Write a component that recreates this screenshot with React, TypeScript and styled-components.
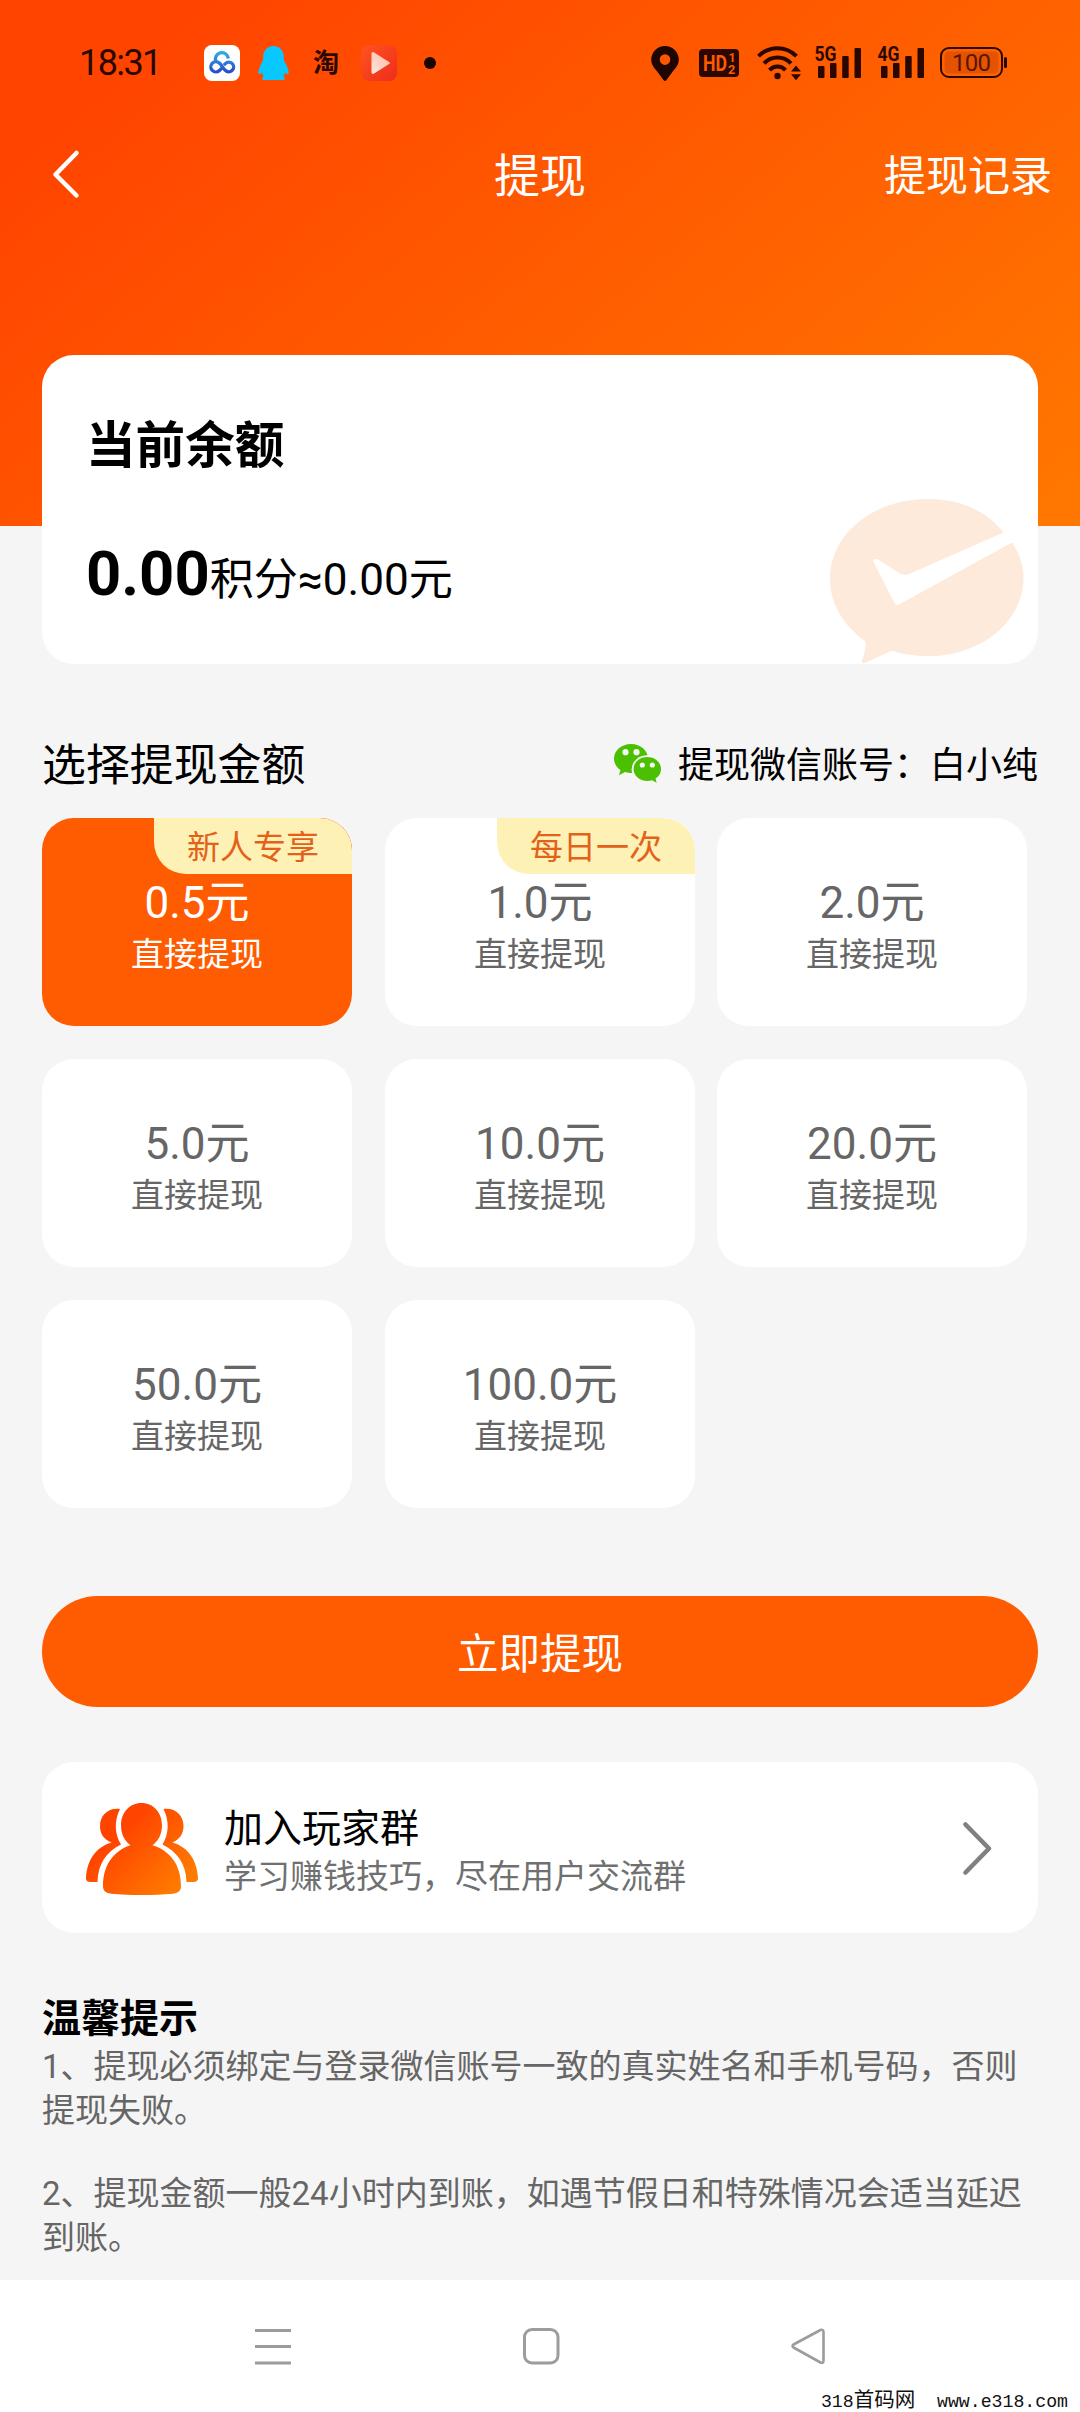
import React from "react";
import styled, { createGlobalStyle } from "styled-components";

const INK = "#2a0800";
const FONT = `Roboto, "Noto Sans CJK SC", sans-serif`;

const GlobalStyle = createGlobalStyle`
  body { margin: 0; background: #f5f5f5; font-family: ${FONT}; }
  * { box-sizing: border-box; }
  p, h1, h2, h3 { margin: 0; font-weight: 400; }
  button { border: 0; background: none; padding: 0; font: inherit; color: inherit; }
  svg { display: block; flex: none; overflow: visible; }
`;

const Page = styled.div`
  width: 1080px;
  height: 2412px;
  display: flex;
  flex-direction: column;
  overflow: hidden;
  background: #f5f5f5;
  color: #000;
`;

const Hero = styled.header`
  flex: none;
  height: 526px;
  background: linear-gradient(140deg, #ff4400 12%, #ff7800 100%);
`;

const StatusBar = styled.div`
  display: flex;
  justify-content: space-between;
  align-items: center;
  height: 126px;
  padding: 0 73px 0 79px;
  color: ${INK};
`;

const StatusGroup = styled.div`
  display: flex;
  align-items: center;
`;

const Clock = styled.span`
  width: 125px;
  font-size: 36px;
  line-height: 40px;
  letter-spacing: -1.6px;
`;

const TaobaoMark = styled.span`
  width: 26px;
  margin: 0 22px 0 24px;
  font-size: 26px;
  line-height: 30px;
  font-weight: 700;
`;

const Dot = styled.i`
  width: 12px;
  height: 12px;
  margin-left: 27px;
  border-radius: 50%;
  background: #1a0500;
`;

const NavBar = styled.nav`
  display: grid;
  grid-template-columns: 1fr auto 1fr;
  align-items: center;
  height: 96px;
  padding: 0 28px 0 50px;
  color: #fff;
`;

const BackButton = styled.button`
  justify-self: start;
`;

const NavTitle = styled.h1`
  padding: 4px 22px 0 0;
  font-size: 46px;
  line-height: 56px;
`;

const NavLink = styled.button`
  justify-self: end;
  padding-top: 6px;
  font-size: 42px;
  line-height: 56px;
  white-space: nowrap;
`;

const Main = styled.main`
  flex: 1;
  min-height: 0;
  display: flex;
  flex-direction: column;
  margin-top: -171px;
  padding: 0 42px;
`;

const Panel = styled.section`
  background: #fff;
  border-radius: 32px;
`;

const BalanceCard = styled(Panel)`
  flex: none;
  display: flex;
  justify-content: space-between;
  align-items: flex-end;
  height: 309px;
  padding-right: 14px;
`;

const BalanceInfo = styled.div`
  align-self: stretch;
  display: flex;
  flex-direction: column;
  gap: 58px;
  padding: 61px 0 0 44px;
`;

const BalanceTitle = styled.h2`
  font-size: 49.6px;
  line-height: 60px;
  font-weight: 700;
`;

const BalanceValue = styled.p`
  font-size: 44.1px;
  line-height: 80px;
  strong { font-size: 61.5px; font-weight: 700; }
`;

const SectionHead = styled.div`
  flex: none;
  display: flex;
  justify-content: space-between;
  align-items: center;
  height: 60px;
  margin-top: 72px;
`;

const SectionTitle = styled.h2`
  font-size: 43.9px;
  line-height: 60px;
`;

const Account = styled.div`
  display: flex;
  align-items: center;
  gap: 16px;
  font-size: 36px;
  line-height: 60px;
  svg { margin-bottom: 4px; }
`;

const AmountGrid = styled.div`
  flex: none;
  display: grid;
  grid-template-columns: 343px 332px 310px;
  row-gap: 33px;
  margin-top: 22px;
`;

const AmountCard = styled.button<{ $selected?: boolean }>`
  position: relative;
  width: 310px;
  height: 208px;
  display: flex;
  flex-direction: column;
  align-items: center;
  padding-top: 58px;
  border-radius: 32px;
  overflow: hidden;
  background: ${(p) => (p.$selected ? "#ff5b00" : "#fff")};
  color: ${(p) => (p.$selected ? "#fff" : "#666")};
`;

const Amount = styled.span`
  font-size: 44px;
  line-height: 54px;
`;

const AmountNote = styled.span`
  font-size: 33px;
  line-height: 50px;
`;

const Badge = styled.span`
  position: absolute;
  top: 0;
  right: 0;
  width: 198px;
  height: 56px;
  border-radius: 0 32px 0 32px;
  background: #fef1b6;
  color: #e3621a;
  font-size: 33px;
  line-height: 59px;
  text-align: center;
`;

const SubmitButton = styled.button`
  flex: none;
  height: 111px;
  margin-top: 88px;
  border-radius: 56px;
  background: #ff5b00;
  color: #fff;
  font-size: 41.5px;
  line-height: 117px;
`;

const GroupCard = styled(Panel)`
  flex: none;
  display: flex;
  align-items: center;
  height: 171px;
  margin-top: 55px;
  padding: 2px 44px 0 44px;
`;

const GroupText = styled.div`
  flex: 1;
  display: flex;
  flex-direction: column;
  padding: 7px 0 0 26px;
`;

const GroupTitle = styled.h3`
  font-size: 39px;
  line-height: 50px;
`;

const GroupNote = styled.p`
  font-size: 33px;
  line-height: 46px;
  color: #707070;
`;

const Tips = styled.section`
  margin-top: 60px;
`;

const TipsTitle = styled.h3`
  font-size: 39px;
  line-height: 52px;
  font-weight: 700;
`;

const Tip = styled.p`
  margin-bottom: 39px;
  font-size: 33px;
  line-height: 44px;
  color: #666;
`;

const SystemBar = styled.footer`
  position: relative;
  flex: none;
  display: flex;
  justify-content: space-between;
  align-items: center;
  height: 132px;
  padding: 0 254px 0 255px;
  background: #fff;
`;

const Watermark = styled.span`
  position: absolute;
  right: 12px;
  bottom: -1px;
  font-family: "Liberation Mono", "Noto Sans CJK SC", monospace;
  font-size: 18.2px;
  line-height: 21px;
  white-space: pre;
  color: #111;
`;

const WatermarkName = styled.span`
  font-size: 20.500px;
`;

const AppIcons = () => (
  <>
    <svg width="36" height="36" viewBox="0 0 36 36">
      <defs>
        <linearGradient id="disk" gradientUnits="userSpaceOnUse" x1="0" y1="8" x2="0" y2="26">
          <stop offset="0" stopColor="#2fa8e6" />
          <stop offset="1" stopColor="#2a50c8" />
        </linearGradient>
      </defs>
      <rect width="36" height="36" rx="8" fill="#fff" />
      <g fill="none" stroke="url(#disk)" strokeWidth="3.300" strokeLinecap="butt" strokeLinejoin="round">
        <path d="M12 17a6.500 6.500 0 1 1 12.300-3.500" />
        <path d="M18.800 22.300L15.400 25.500a5.100 5.100 0 1 1-.2-7.600C17.800 19.800 19.500 24.500 22.200 26a4.800 4.800 0 1 0-.8-7.400L19.800 20.200" />
      </g>
    </svg>
    <svg width="31" height="36" viewBox="0 0 31 36" style={{ marginLeft: 18 }}>
      <path
        fill="#08c8ff"
        d="M15.500 1C9.500 1 5.500 5.500 5.200 11.500c0 2-.2 3.500-.8 5.200C2 20.500-.5 27 .6 29c.8 1 2-.5 3.200-1.200.5 1.500 1.200 2.700 2 3.600-2.300 1-2.200 3.600.5 3.600h18.400c2.700 0 2.800-2.600.5-3.600.8-.9 1.500-2.100 2-3.600 1.200.7 2.400 2.200 3.200 1.200 1.100-2-1.400-8.500-3.800-12.300-.6-1.700-.8-3.200-.8-5.200C25.500 5.500 21.500 1 15.500 1z"
      />
    </svg>
    <TaobaoMark>淘</TaobaoMark>
    <svg width="36" height="36" viewBox="0 0 36 36">
      <defs>
        <linearGradient id="video" x1="0" y1="0" x2="1" y2="1">
          <stop offset="0" stopColor="#ff5420" />
          <stop offset="1" stopColor="#ee2c1c" />
        </linearGradient>
        <linearGradient id="play" x1="1" y1="0" x2="0" y2="1">
          <stop offset="0" stopColor="#ffb9a4" />
          <stop offset="1" stopColor="#ffe6de" />
        </linearGradient>
      </defs>
      <rect width="36" height="36" rx="8" fill="url(#video)" />
      <path d="M10.500 9v18c0 1.800 1.200 2.400 2.600 1.600l15-9.500c1-.7 1-1.500 0-2.200l-15-9.500C11.700 6.500 10.500 7.200 10.500 9z" fill="url(#play)" />
    </svg>
  </>
);

const PinIcon = () => (
  <svg width="28" height="35" viewBox="0 0 28 35">
    <path fillRule="evenodd" fill="#1f0600" d="M14 0a13.800 13.800 0 0 0-13.800 13.800c0 5.500 4 9.200 7.300 13.400l5 6.800q1.500 1.800 3 0l5-6.800c3.300-4.200 7.300-7.900 7.300-13.400A13.800 13.800 0 0 0 14 0zm0 8.300a5.300 5.300 0 1 1 0 10.600 5.300 5.300 0 0 1 0-10.600z" />
  </svg>
);

const HdIcon = () => (
  <svg width="40" height="28" viewBox="0 0 40 28" style={{ marginLeft: 20 }}>
    <rect width="40" height="28" rx="4" fill={INK} />
    <g fill="#ff5a00" fontFamily="Roboto" fontWeight="700">
      <text x="4" y="22" fontSize="22" textLength="24" lengthAdjust="spacingAndGlyphs">HD</text>
      <text x="29.500" y="13" fontSize="12.500">1</text>
      <text x="29" y="25" fontSize="12.500">2</text>
    </g>
  </svg>
);

const WifiIcon = () => (
  <svg width="45" height="36" viewBox="0 0 45 36" style={{ marginLeft: 18 }}>
    <g fill="none" stroke={INK} strokeWidth="4">
      <path d="M1.500 11.200C12 .5 29 .5 39.500 11.200" />
      <path d="M7 18.300c7.500-7.800 19.500-7.800 27 0" />
      <path d="M12.500 25.200c4.400-4.800 11.600-4.800 16 0" />
    </g>
    <circle cx="20.500" cy="31" r="3.200" fill={INK} />
    <path fill={INK} d="M34 26.500l5-6 5 6zM34 29.200l5 6 5-6z" />
  </svg>
);

const SignalIcon = ({ label, gap }: { label: string; gap: number }) => (
  <svg width="46" height="34" viewBox="0 0 46 34" style={{ marginLeft: gap }}>
    <text x="-0.500" y="15.300" fontFamily="Roboto" fontSize="21" fontWeight="700" fill={INK} textLength="22" lengthAdjust="spacingAndGlyphs">
      {label}
    </text>
    <g fill={INK}>
      <rect x="3" y="20" width="6.500" height="12" rx="1" />
      <rect x="15" y="17" width="6.500" height="15" rx="1" />
      <rect x="27.200" y="10" width="6.500" height="22" rx="1" />
      <rect x="39.500" y="2" width="6.500" height="30" rx="1" />
    </g>
  </svg>
);

const BatteryIcon = () => (
  <svg width="67" height="32" viewBox="0 0 67 32" style={{ marginLeft: 16 }}>
    <rect x="1" y="1" width="61" height="29" rx="8" fill="none" stroke={INK} strokeWidth="2" />
    <rect x="4.500" y="4.500" width="54" height="22" rx="4.500" fill="#7a2000" opacity=".2" />
    <rect x="64" y="10" width="3" height="11" rx="1.500" fill={INK} />
    <text x="31.500" y="24" fontFamily="Roboto" fontSize="24" fill="#5c1500" textAnchor="middle" textLength="39">100</text>
  </svg>
);

const Bubble = () => (
  <svg width="194" height="166" viewBox="0 0 194 166">
    <path
      fill="#fdeadb"
      d="M173.500 34.500C157 13 130 1 98 1 43 1 0 36 0 81c0 25 14 47 35.500 62.500C36 150 34 158 31.500 163q-.5 3 3.500 2 15-7 27-12.200c11 3.700 23 5.300 36 5.300 53 0 95.500-34 95.500-79 0-12-4.500-24-11.500-34.600L69 106.500q-3 1.500-4.500-1.500L43 63q0-3 5-1.500l22 14q4 2.500 9 .5z"
    />
  </svg>
);

const WechatIcon = () => (
  <svg width="48" height="40" viewBox="0 0 48 40">
    <path fill="#4ac000" d="M17 0C7.500 0 0 6.500 0 14.800c0 4.600 2.500 8.500 6.500 11.300L5 31.200l6-3.100c2 .6 4 .9 6.200.9 9.500 0 16.800-6.500 16.800-14.400S26.500 0 17 0z" />
    <ellipse cx="33.200" cy="25.300" rx="15.600" ry="14" fill="#f5f5f5" />
    <path fill="#4ac000" d="M33.300 13C25.500 13 19.600 18.300 19.600 25s6 12 13.700 12c1.700 0 3.300-.2 4.800-.7l4.600 2.400-1.200-4.200C45 32.400 47 29 47 25c0-6.700-6-12-13.700-12z" />
    <g fill="#f5f5f5">
      <circle cx="11.500" cy="8.200" r="3.100" />
      <circle cx="22.500" cy="8.200" r="3.100" />
      <circle cx="28.300" cy="21" r="2.600" />
      <circle cx="38.300" cy="21" r="2.600" />
    </g>
  </svg>
);

const PeopleIcon = () => (
  <svg width="112" height="92" viewBox="0 0 112 92">
    <defs>
      <linearGradient id="people" gradientUnits="userSpaceOnUse" x1="20" y1="15" x2="90" y2="85">
        <stop offset=".2" stopColor="#ff4400" />
        <stop offset="1" stopColor="#ff7a00" />
      </linearGradient>
    </defs>
    <g fill="url(#people)">
      <path d="M55.500 0C43.500 0 35 9.500 35 22.500c0 8.500 3.500 15.500 9.500 19.700C28.500 47.500 17 61 17 83c0 5 3 7 8 7.700 19 1.800 42 1.800 62 0 5-.7 8-2.700 8-7.700 0-22-11.500-35.500-28.500-40.800C72.500 38 76 31 76 22.500 76 9.500 67.500 0 55.500 0z" />
      <path d="M34 6C22 4.500 14 12.500 14 23c0 8 4 13.500 11.500 16.500C10 44 1 57 0 75c0 3 2 4 5 4h6.500C12 61 20 49 35 41.500 28.500 31 28 18 34 6z" />
      <path d="M77.500 6C89.500 4.500 97.500 12.500 97.500 23c0 8-4 13.500-11 16.500C102 44 111 57 112 75c0 3-2 4-5 4h-6.500C100 61 91.500 49 76.500 41.500 83 31 83.500 18 77.500 6z" />
    </g>
  </svg>
);

const amounts: { value: string; badge?: string }[] = [
  { value: "0.5元", badge: "新人专享" },
  { value: "1.0元", badge: "每日一次" },
  { value: "2.0元" },
  { value: "5.0元" },
  { value: "10.0元" },
  { value: "20.0元" },
  { value: "50.0元" },
  { value: "100.0元" },
];

export default function App() {
  return (
    <Page>
      <GlobalStyle />
      <Hero>
        <StatusBar>
          <StatusGroup>
            <Clock>18:31</Clock>
            <AppIcons />
            <Dot />
          </StatusGroup>
          <StatusGroup>
            <PinIcon />
            <HdIcon />
            <WifiIcon />
            <SignalIcon label="5G" gap={13} />
            <SignalIcon label="4G" gap={17} />
            <BatteryIcon />
          </StatusGroup>
        </StatusBar>
        <NavBar>
          <BackButton aria-label="返回">
            <svg width="32" height="50" viewBox="0 0 32 50" fill="none" stroke="#fff" strokeWidth="4.500" strokeLinecap="round" strokeLinejoin="round">
              <path d="M26.500 4L5.500 25.500l21 21" />
            </svg>
          </BackButton>
          <NavTitle>提现</NavTitle>
          <NavLink>提现记录</NavLink>
        </NavBar>
      </Hero>

      <Main>
        <BalanceCard>
          <BalanceInfo>
            <BalanceTitle>当前余额</BalanceTitle>
            <BalanceValue>
              <strong>0.00</strong>积分≈0.00元
            </BalanceValue>
          </BalanceInfo>
          <Bubble />
        </BalanceCard>

        <SectionHead>
          <SectionTitle>选择提现金额</SectionTitle>
          <Account>
            <WechatIcon />
            <span>提现微信账号：白小纯</span>
          </Account>
        </SectionHead>

        <AmountGrid>
          {amounts.map((a, i) => (
            <AmountCard key={a.value} $selected={i === 0}>
              {a.badge && <Badge>{a.badge}</Badge>}
              <Amount>{a.value}</Amount>
              <AmountNote>直接提现</AmountNote>
            </AmountCard>
          ))}
        </AmountGrid>

        <SubmitButton>立即提现</SubmitButton>

        <GroupCard>
          <PeopleIcon />
          <GroupText>
            <GroupTitle>加入玩家群</GroupTitle>
            <GroupNote>学习赚钱技巧，尽在用户交流群</GroupNote>
          </GroupText>
          <svg width="34" height="58" viewBox="0 0 34 58" fill="none" stroke="#808080" strokeWidth="4.600" strokeLinecap="round" strokeLinejoin="round">
            <path d="M5.500 4.500L29 28.500l-23.500 24" />
          </svg>
        </GroupCard>

        <Tips>
          <TipsTitle>温馨提示</TipsTitle>
          <Tip>1、提现必须绑定与登录微信账号一致的真实姓名和手机号码，否则提现失败。</Tip>
          <Tip>2、提现金额一般24小时内到账，如遇节假日和特殊情况会适当延迟到账。</Tip>
        </Tips>
      </Main>

      <SystemBar>
        <svg width="36" height="38" viewBox="0 0 36 38" fill="none" stroke="#9c9c9c" strokeWidth="3">
          <path d="M0 3.500h36M0 19.500h36M0 36h36" />
        </svg>
        <svg width="37" height="38" viewBox="0 0 37 38" fill="none" stroke="#9c9c9c" strokeWidth="3">
          <rect x="1.500" y="2.500" width="33.500" height="33.500" rx="7.500" />
        </svg>
        <svg width="35" height="38" viewBox="0 0 35 38" fill="none" stroke="#9c9c9c" strokeWidth="2.600" strokeLinejoin="round">
          <path d="M29.500 3L2.500 17.500q-2 1.500 0 3L29.500 35.500q3 1.200 3-2v-28.500q0-3-3-2z" />
        </svg>
        <Watermark>
          318<WatermarkName>首码网</WatermarkName>{"  www.e318.com"}
        </Watermark>
      </SystemBar>
    </Page>
  );
}
